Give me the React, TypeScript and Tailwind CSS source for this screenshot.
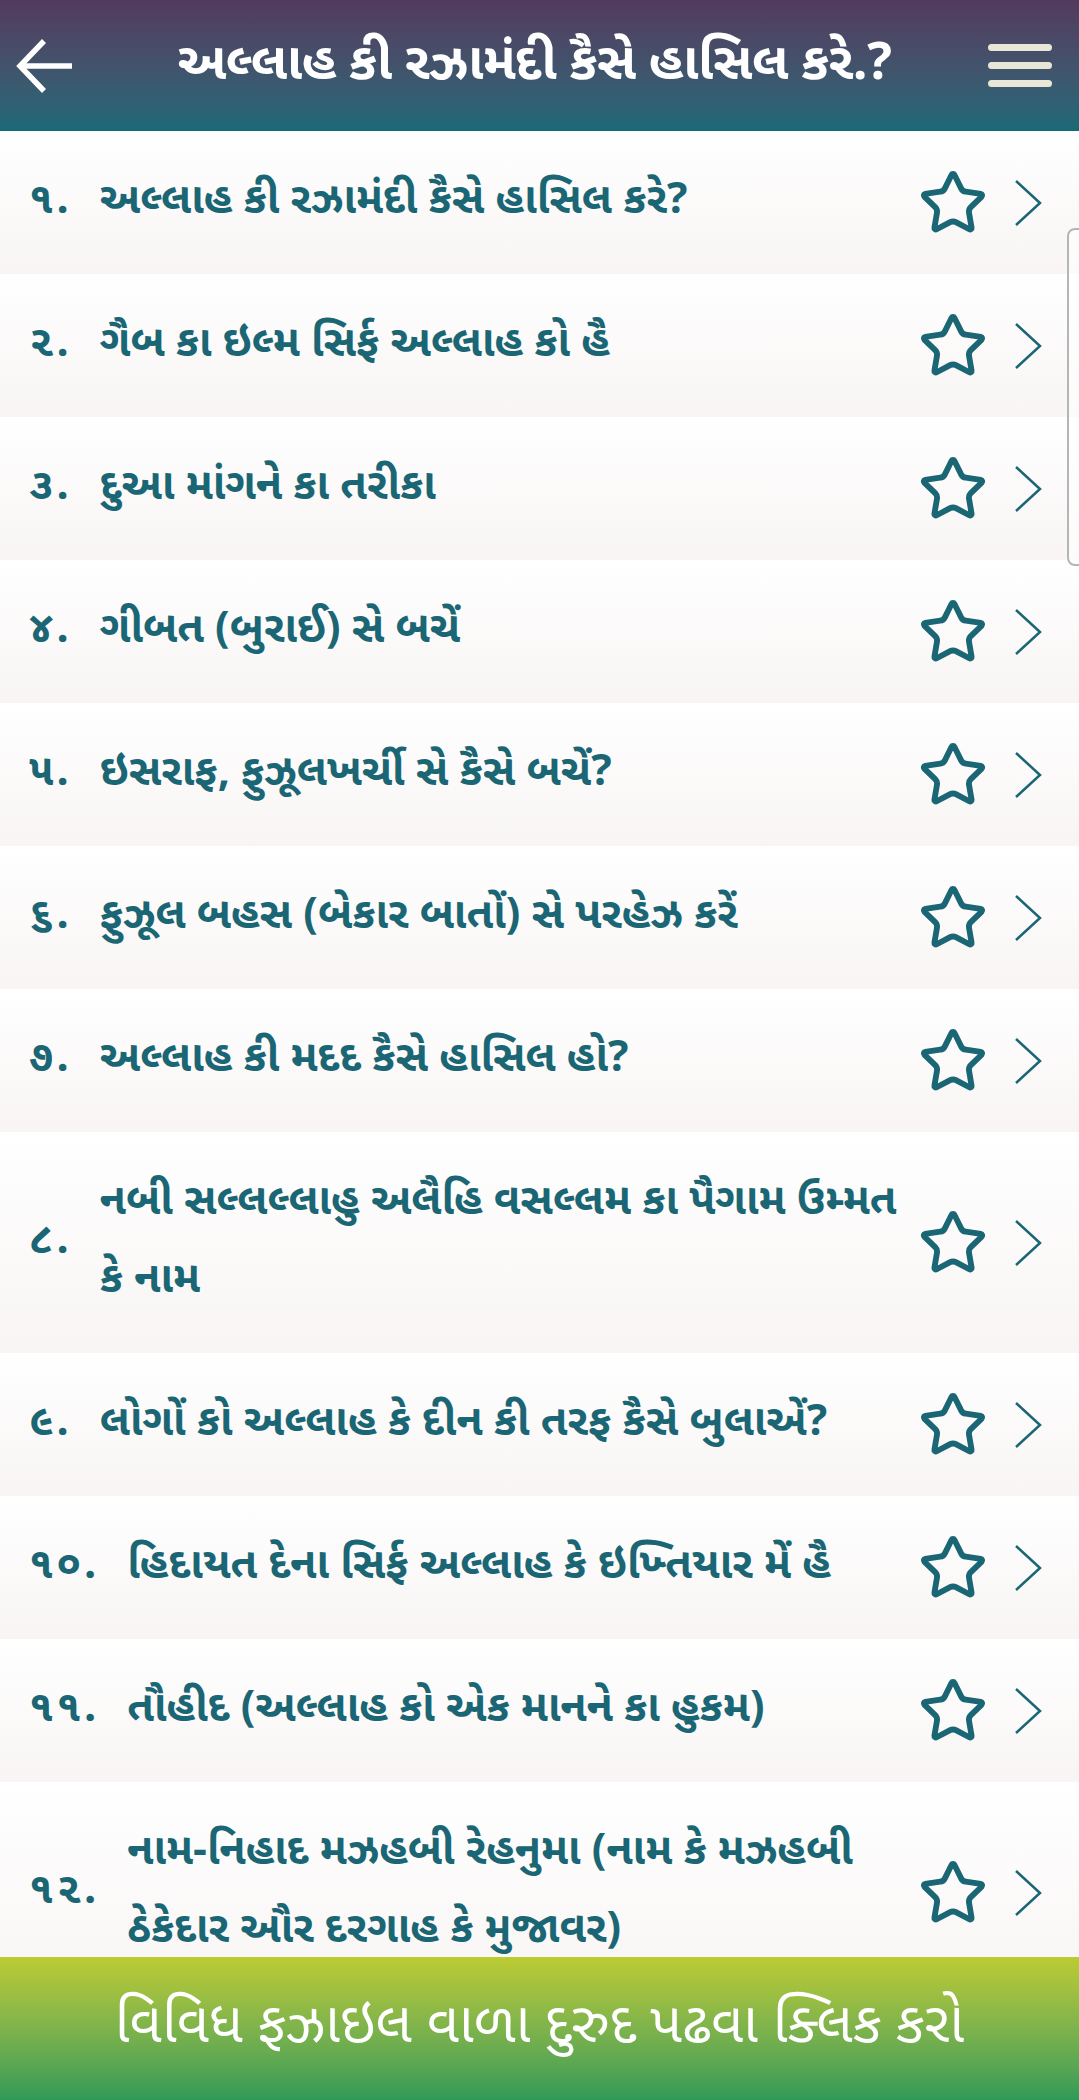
import React from 'react';
import { Star } from 'lucide-react';

const items = [
  { no: '૧.', title: 'અલ્લાહ કી રઝામંદી કૈસે હાસિલ કરે?' },
  { no: '૨.', title: 'ગૈબ કા ઇલ્મ સિર્ફ અલ્લાહ કો હૈ' },
  { no: '૩.', title: 'દુઆ માંગને કા તરીકા' },
  { no: '૪.', title: 'ગીબત (બુરાઈ) સે બચેં' },
  { no: '૫.', title: 'ઇસરાફ, ફુઝૂલખર્ચી સે કૈસે બચેં?' },
  { no: '૬.', title: 'ફુઝૂલ બહસ (બેકાર બાતોં) સે પરહેઝ કરેં' },
  { no: '૭.', title: 'અલ્લાહ કી મદદ કૈસે હાસિલ હો?' },
  { no: '૮.', title: 'નબી સલ્લલ્લાહુ અલૈહિ વસલ્લમ કા પૈગામ ઉમ્મત કે નામ' },
  { no: '૯.', title: 'લોગોં કો અલ્લાહ કે દીન કી તરફ કૈસે બુલાએં?' },
  { no: '૧૦.', title: 'હિદાયત દેના સિર્ફ અલ્લાહ કે ઇખ્તિયાર મેં હૈ' },
  { no: '૧૧.', title: 'તૌહીદ (અલ્લાહ કો એક માનને કા હુકમ)' },
  { no: '૧૨.', title: 'નામ-નિહાદ મઝહબી રેહનુમા (નામ કે મઝહબી ઠેકેદાર ઔર દરગાહ કે મુજાવર)' },
];

const font = { fontFamily: '"Noto Sans Gujarati", "Noto Sans", "DejaVu Sans", sans-serif' };

const App: React.FC = () => {
  return (
    <div className="relative w-[1079px] h-[2100px] flex flex-col overflow-hidden bg-white" style={font}>
      {/* Header */}
      <div className="h-[131px] shrink-0 flex items-center bg-gradient-to-b from-[#523a5f] to-[#176a78] text-white">
        <div className="w-[100px] pl-[14px] flex items-center">
          <svg width="62" height="62" viewBox="0 0 62 62" fill="none" stroke="white" strokeWidth="5.5" strokeLinecap="butt">
            <path d="M6 31 H58" />
            <path d="M30 6 L6 31 L30 56" />
          </svg>
        </div>
        <div className="flex-1 text-center text-[52px] font-bold leading-none whitespace-nowrap tracking-[-0.5px]">અલ્લાહ કી રઝામંદી કૈસે હાસિલ કરે.?</div>
        <div className="w-[110px] flex flex-col items-center gap-[11px] pr-[8px]">
          <span className="block w-[64px] h-[7px] rounded-full bg-[#e8e6d6]" />
          <span className="block w-[64px] h-[7px] rounded-full bg-[#e8e6d6]" />
          <span className="block w-[64px] h-[7px] rounded-full bg-[#e8e6d6]" />
        </div>
      </div>

      {/* List */}
      <div className="flex-1 overflow-hidden">
        {items.map((it) => (
          <div
            key={it.no}
            className="flex items-center pl-[29px] pr-[37px] pt-[33px] pb-[32px] bg-gradient-to-b from-white to-[#f8f5f4] text-[#1b6674]"
          >
            <span className="shrink-0 text-[43px] font-bold leading-[78px] tracking-[3px] mr-[28px]">{it.no}</span>
            <span className="flex-1 text-[43px] font-bold leading-[78px]">{it.title}</span>
            <Star size={70} strokeWidth={2} className="shrink-0 ml-[18px] text-[#1b6674]" />
            <svg width="28" height="46" viewBox="0 0 28 46" fill="none" stroke="#1b6674" strokeWidth="2.5" className="shrink-0 ml-[26px]">
              <path d="M2 1 L26 23 L2 45" />
            </svg>
          </div>
        ))}
      </div>

      {/* Bottom bar */}
      <div className="h-[143px] shrink-0 flex items-center justify-center bg-gradient-to-b from-[#bccb31] to-[#2e9a57] text-white text-[56px] leading-none">
        વિવિધ ફઝાઇલ વાળા દુરુદ પઢવા ક્લિક કરો
      </div>

      {/* Scrollbar */}
      <div className="absolute right-[-10px] top-[228px] w-[22px] h-[338px] rounded-[8px] border-2 border-[#b5b5b5] bg-white/60" />
    </div>
  );
};

export default App;
